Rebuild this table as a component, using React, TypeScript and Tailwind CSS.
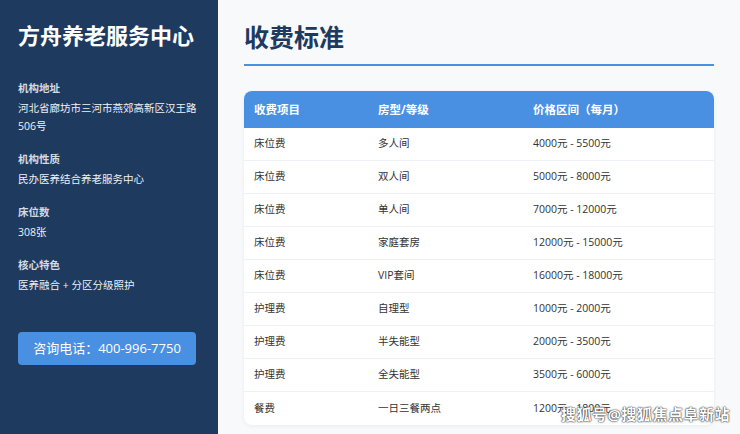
const rows = [
  ["床位费", "多人间", "4000元 - 5500元"],
  ["床位费", "双人间", "5000元 - 8000元"],
  ["床位费", "单人间", "7000元 - 12000元"],
  ["床位费", "家庭套房", "12000元 - 15000元"],
  ["床位费", "VIP套间", "16000元 - 18000元"],
  ["护理费", "自理型", "1000元 - 2000元"],
  ["护理费", "半失能型", "2000元 - 3500元"],
  ["护理费", "全失能型", "3500元 - 6000元"],
  ["餐费", "一日三餐两点", "1200元 - 1800元"],
];

const info = [
  { label: "机构地址", value: "河北省廊坊市三河市燕郊高新区汉王路506号" },
  { label: "机构性质", value: "民办医养结合养老服务中心" },
  { label: "床位数", value: "308张" },
  { label: "核心特色", value: "医养融合 + 分区分级照护" },
];

export default function App() {
  return (
    <div className="relative flex h-[434px] w-[740px] overflow-hidden bg-[#f7f9fb] font-['Open_Sans','Noto_Sans_CJK_SC',sans-serif]">
      {/* sidebar */}
      <aside className="flex w-[218px] shrink-0 flex-col bg-[#1e3a5f] px-[18px] pt-5 text-white">
        <h2 className="text-[22px] font-bold leading-[30px]">方舟养老服务中心</h2>
        <div className="mt-[29px] flex flex-col gap-[15px]">
          {info.map((it) => (
            <div key={it.label}>
              <p className="text-[10.5px] font-bold leading-[18px] text-[#d3dae4]">{it.label}</p>
              <p className="mt-[2px] text-[10.5px] leading-[18px] text-[#eef2f6]">{it.value}</p>
            </div>
          ))}
        </div>
        <div className="mt-[38px] flex h-[33px] w-[178px] items-center justify-center rounded-[4px] bg-[#4a90e2] text-[13px] text-white">
          咨询电话：400-996-7750
        </div>
      </aside>

      {/* main */}
      <main className="flex-1 px-[26px] pt-5">
        <h1 className="border-b-2 border-[#4a90e2] pb-[10px] text-[25px] font-bold leading-[34px] text-[#1e3a5f]">收费标准</h1>
        <div className="mt-[25px] overflow-hidden rounded-lg bg-white shadow-[0_1px_4px_rgba(0,0,0,0.06)]">
          <div className="grid h-[37px] grid-cols-[124px_155px_1fr] items-center bg-[#4a90e2] px-[10px] text-[11.5px] font-bold text-white">
            <span>收费项目</span>
            <span>房型/等级</span>
            <span>价格区间（每月）</span>
          </div>
          {rows.map((r, i) => (
            <div key={i} className="grid h-[33px] grid-cols-[124px_155px_1fr] items-center border-b border-[#edf1f6] px-[10px] text-[10.5px] text-[#333] last:border-b-0">
              <span>{r[0]}</span>
              <span>{r[1]}</span>
              <span>{r[2]}</span>
            </div>
          ))}
        </div>
      </main>

      <div className="absolute bottom-[9px] right-[10px] text-[15px] font-bold tracking-[0.5px] text-white [text-shadow:0_0_2px_#333,0_0_1px_#000]">
        搜狐号@搜狐焦点阜新站
      </div>
    </div>
  );
}
